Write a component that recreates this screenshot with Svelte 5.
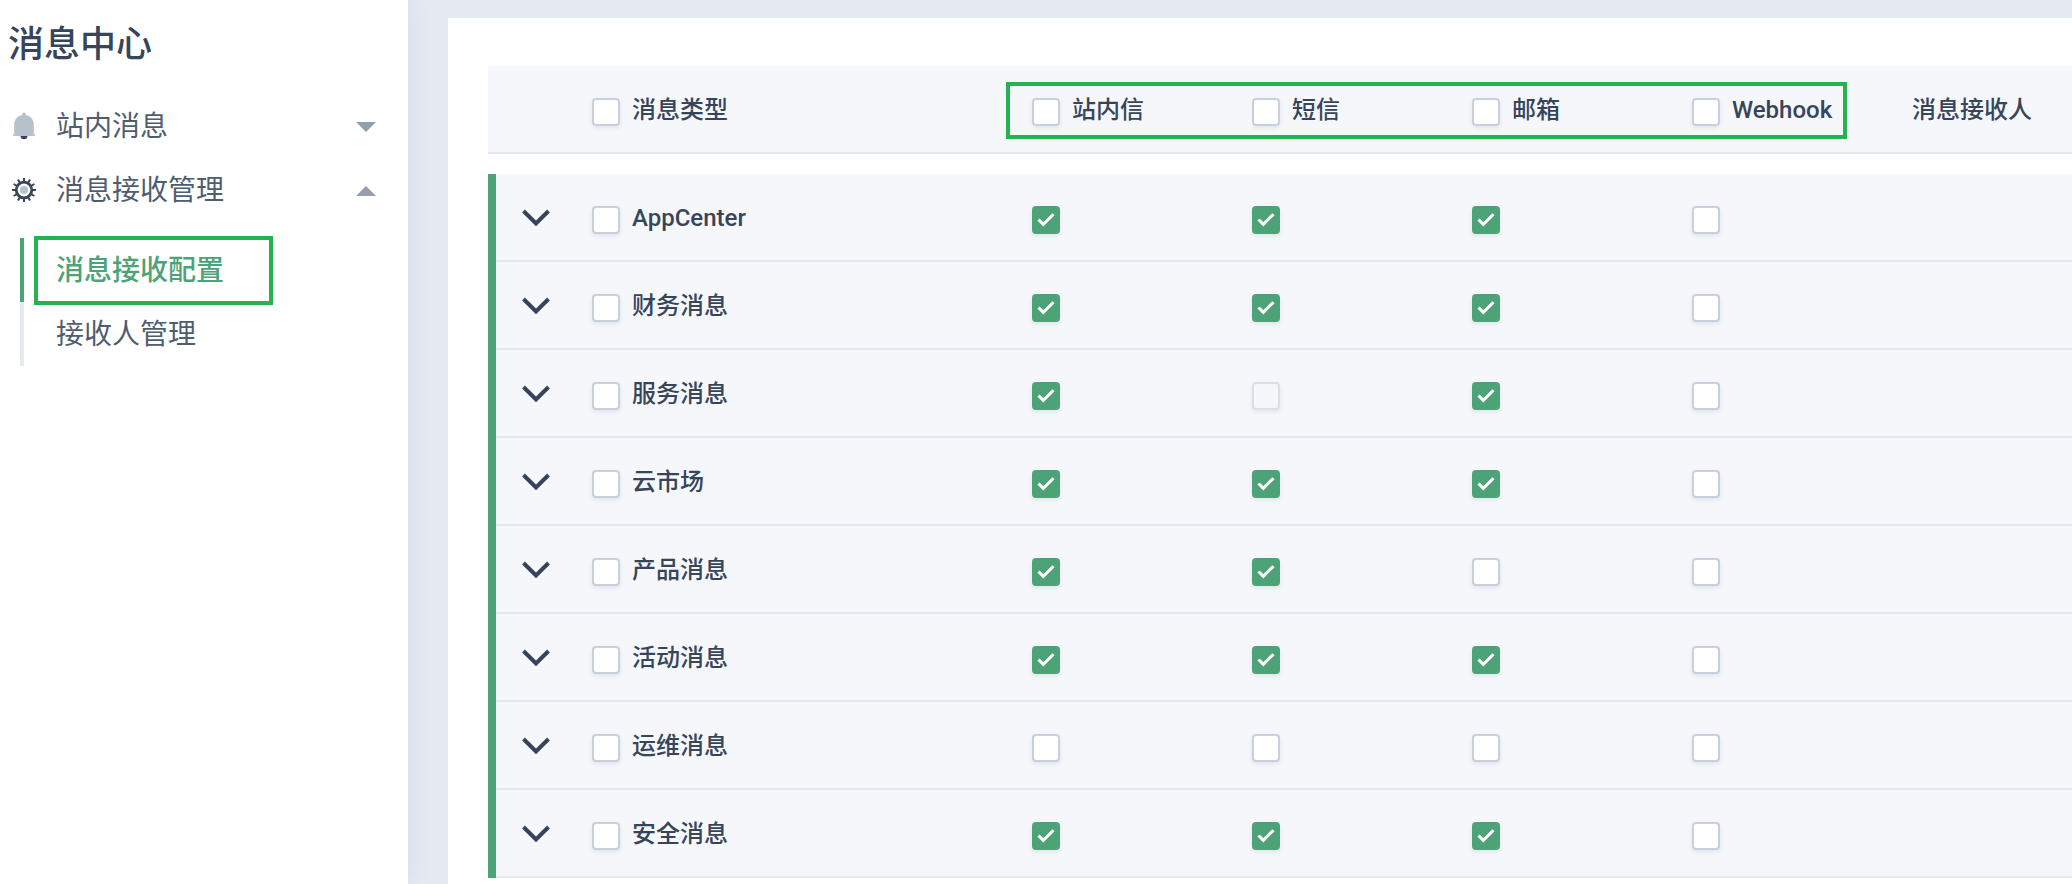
<script>
  const channels = ['站内信', '短信', '邮箱', 'Webhook'];

  let all = $state(false);
  let channelAll = $state([false, false, false, false]);
  let receiveOpen = $state(true);

  let rows = $state([
    { name: 'AppCenter', on: [true, true, true, false] },
    { name: '财务消息', on: [true, true, true, false] },
    { name: '服务消息', on: [true, false, true, false], locked: 1 },
    { name: '云市场', on: [true, true, true, false] },
    { name: '产品消息', on: [true, true, false, false] },
    { name: '活动消息', on: [true, true, true, false] },
    { name: '运维消息', on: [false, false, false, false] },
    { name: '安全消息', on: [true, true, true, false] }
  ].map((row) => ({ ...row, selected: false })));

  const teeth = Array.from({ length: 12 }, (_, i) => i * 30);
</script>

<div class="page">
  <aside class="sidebar">
    <h1>消息中心</h1>
    <nav>
      <button class="item" type="button" aria-expanded="false">
        <svg class="icon" viewBox="0 0 24 28" aria-hidden="true">
          <path d="M8.500 23.500h7a3.500 3.800 0 0 1-7 0z" fill="#36455a" />
          <path d="M12 .5c1 0 1.600.7 1.600 1.800v.8c4.800.8 8.200 4.500 8.200 9.200v9.400l1.200 1.300v1H1v-1l1.200-1.300v-9.400c0-4.700 3.400-8.400 8.200-9.200v-.8c0-1.100.6-1.800 1.600-1.800z" fill="#b7c1cc" />
        </svg>
        <span>站内消息</span>
        <svg class="caret" viewBox="0 0 20 10" aria-hidden="true"><path d="M0 0h20L10 10z" /></svg>
      </button>
      <button class="item" type="button" aria-expanded={receiveOpen} onclick={() => (receiveOpen = !receiveOpen)}>
        <svg class="icon" viewBox="0 0 24 28" aria-hidden="true">
          <g transform="translate(12 14)">
            {#each teeth as angle}
              <rect x="-1" y="-12" width="2" height="4" fill="#36455a" transform="rotate({angle})" />
            {/each}
            <circle r="7.800" fill="#fff" stroke="#36455a" stroke-width="2.800" />
            <circle r="4" fill="#b7c1cc" />
          </g>
        </svg>
        <span>消息接收管理</span>
        <svg class="caret" viewBox="0 0 20 10" aria-hidden="true">
          <path d={receiveOpen ? 'M0 10h20L10 0z' : 'M0 0h20L10 10z'} />
        </svg>
      </button>
      {#if receiveOpen}
        <ul>
          <li class="current"><a href="#config" aria-current="page">消息接收配置</a></li>
          <li><a href="#receivers">接收人管理</a></li>
        </ul>
      {/if}
    </nav>
  </aside>

  <main>
    <section class="card">
      <table>
        <colgroup>
          <col class="col-toggle" />
          <col class="col-type" />
          {#each channels as _}<col class="col-channel" />{/each}
          <col />
        </colgroup>
        <thead>
          <tr>
            <td></td>
            <th scope="col">
              <label><input type="checkbox" bind:checked={all} />消息类型</label>
            </th>
            {#each channels as channel, i}
              <th scope="col" class:marked={i === 0}>
                <label><input type="checkbox" bind:checked={channelAll[i]} />{channel}</label>
              </th>
            {/each}
            <th scope="col">消息接收人</th>
          </tr>
        </thead>
        <tbody>
          {#each rows as row}
            <tr>
              <td class="toggle">
                <button type="button" aria-label={`展开${row.name}`}>
                  <svg viewBox="0 0 28 18" aria-hidden="true"><path d="M1.500 2 14 14.500 26.500 2" /></svg>
                </button>
              </td>
              <th scope="row">
                <label><input type="checkbox" bind:checked={row.selected} />{row.name}</label>
              </th>
              {#each channels as channel, i}
                <td>
                  <label>
                    <input
                      type="checkbox"
                      aria-label={`${row.name} ${channel}`}
                      bind:checked={row.on[i]}
                      disabled={row.locked === i}
                    />
                  </label>
                </td>
              {/each}
              <td></td>
            </tr>
          {/each}
        </tbody>
      </table>
    </section>
  </main>
</div>

<style>
  :global(body) {
    background: #e5e9f2;
  }

  .page {
    display: flex;
    min-height: 100vh;
    overflow: hidden;
    font-family: Roboto, 'Noto Sans CJK SC', sans-serif;
    color: #36455a;
  }

  .sidebar {
    position: relative;
    flex: 0 0 408px;
    background: #fff;
    box-shadow: 0 0 24px rgba(54, 69, 90, 0.08);
  }

  h1 {
    margin: 0;
    padding: 21px 8px 25px;
    font-size: 36px;
    font-weight: 500;
    line-height: 48px;
  }

  button {
    padding: 0;
    border: 0;
    background: none;
    font: inherit;
    color: inherit;
    cursor: pointer;
  }

  .item {
    display: flex;
    align-items: center;
    width: 100%;
    height: 64px;
    padding: 0 32px 0 12px;
    font-size: 28px;
    line-height: 40px;
    color: #4f5d70;
  }

  .item span {
    padding-top: 2px;
  }

  .icon {
    width: 24px;
    height: 28px;
    margin-right: 20px;
  }

  .caret {
    width: 20px;
    height: 10px;
    margin: 2px 0 0 auto;
    fill: #959fab;
  }

  ul {
    margin: 16px 0 0 20px;
    padding: 0;
    list-style: none;
  }

  li {
    position: relative;
    height: 64px;
    padding-left: 32px;
    border-left: 4px solid #e5e9f2;
    font-size: 28px;
    line-height: 66px;
  }

  li a {
    color: #4f5d70;
    text-decoration: none;
  }

  li.current {
    border-left-color: #4ca378;
  }

  li.current a {
    font-weight: 500;
    color: #4ca378;
  }

  li.current::after,
  .marked::after {
    content: '';
    position: absolute;
    box-sizing: border-box;
    border: 4px solid #24b34f;
    pointer-events: none;
  }

  li.current::after {
    top: -2px;
    left: 10px;
    width: 239px;
    height: 69px;
  }

  main {
    display: flex;
    flex: 1;
    min-width: 0;
    padding: 18px 0 0 40px;
  }

  .card {
    flex: 1;
    min-width: 0;
    position: relative;
    padding: 48px 0 6px 40px;
    background: #fff;
  }

  table {
    width: 100%;
    table-layout: fixed;
    border-spacing: 0;
    font-size: 24px;
    line-height: 32px;
  }

  .col-toggle {
    width: 104px;
  }

  .col-type {
    width: 440px;
  }

  .col-channel {
    width: 220px;
  }

  th,
  td {
    box-sizing: border-box;
    height: 88px;
    padding: 0;
    background: linear-gradient(#e4e9f0, #e4e9f0) bottom / 100% 2px no-repeat #f5f7fb;
    font-weight: 500;
    text-align: left;
    vertical-align: middle;
    white-space: nowrap;
  }

  tbody::before {
    content: '';
    display: block;
    height: 20px;
  }

  .toggle {
    padding-left: 34px;
    background:
      linear-gradient(#4ca378, #4ca378) left / 8px 100% no-repeat,
      linear-gradient(#e4e9f0, #e4e9f0) bottom / 100% 2px no-repeat,
      #f5f7fb;
  }

  .toggle button {
    display: block;
  }

  .toggle svg {
    display: block;
    width: 28px;
    height: 18px;
    fill: none;
    stroke: #36455a;
    stroke-width: 4;
  }

  .marked {
    position: relative;
  }

  .marked::after {
    top: 16px;
    left: -26px;
    width: calc(400% - 39px);
    height: 57px;
  }

  label {
    display: flex;
    align-items: center;
    gap: 12px;
  }

  input {
    appearance: none;
    box-sizing: border-box;
    flex: none;
    width: 28px;
    height: 28px;
    margin: 4px 0 0;
    border: 2px solid #c8d0dd;
    border-radius: 4px;
    background: #fff;
    box-shadow: 0 2px 4px rgba(54, 69, 90, 0.1);
  }

  input:checked {
    border-color: #4ca378;
    background: #4ca378
      url("data:image/svg+xml,%3Csvg xmlns='http://www.w3.org/2000/svg' viewBox='0 0 28 28'%3E%3Cpath d='M6.500 13.500 11.300 18.300 21.500 8.200' fill='none' stroke='white' stroke-width='3'/%3E%3C/svg%3E")
      center / 28px 28px no-repeat;
    background-origin: border-box;
  }

  input:disabled {
    border-color: #d8dfe7;
    background: #f5f7fa;
  }
</style>
